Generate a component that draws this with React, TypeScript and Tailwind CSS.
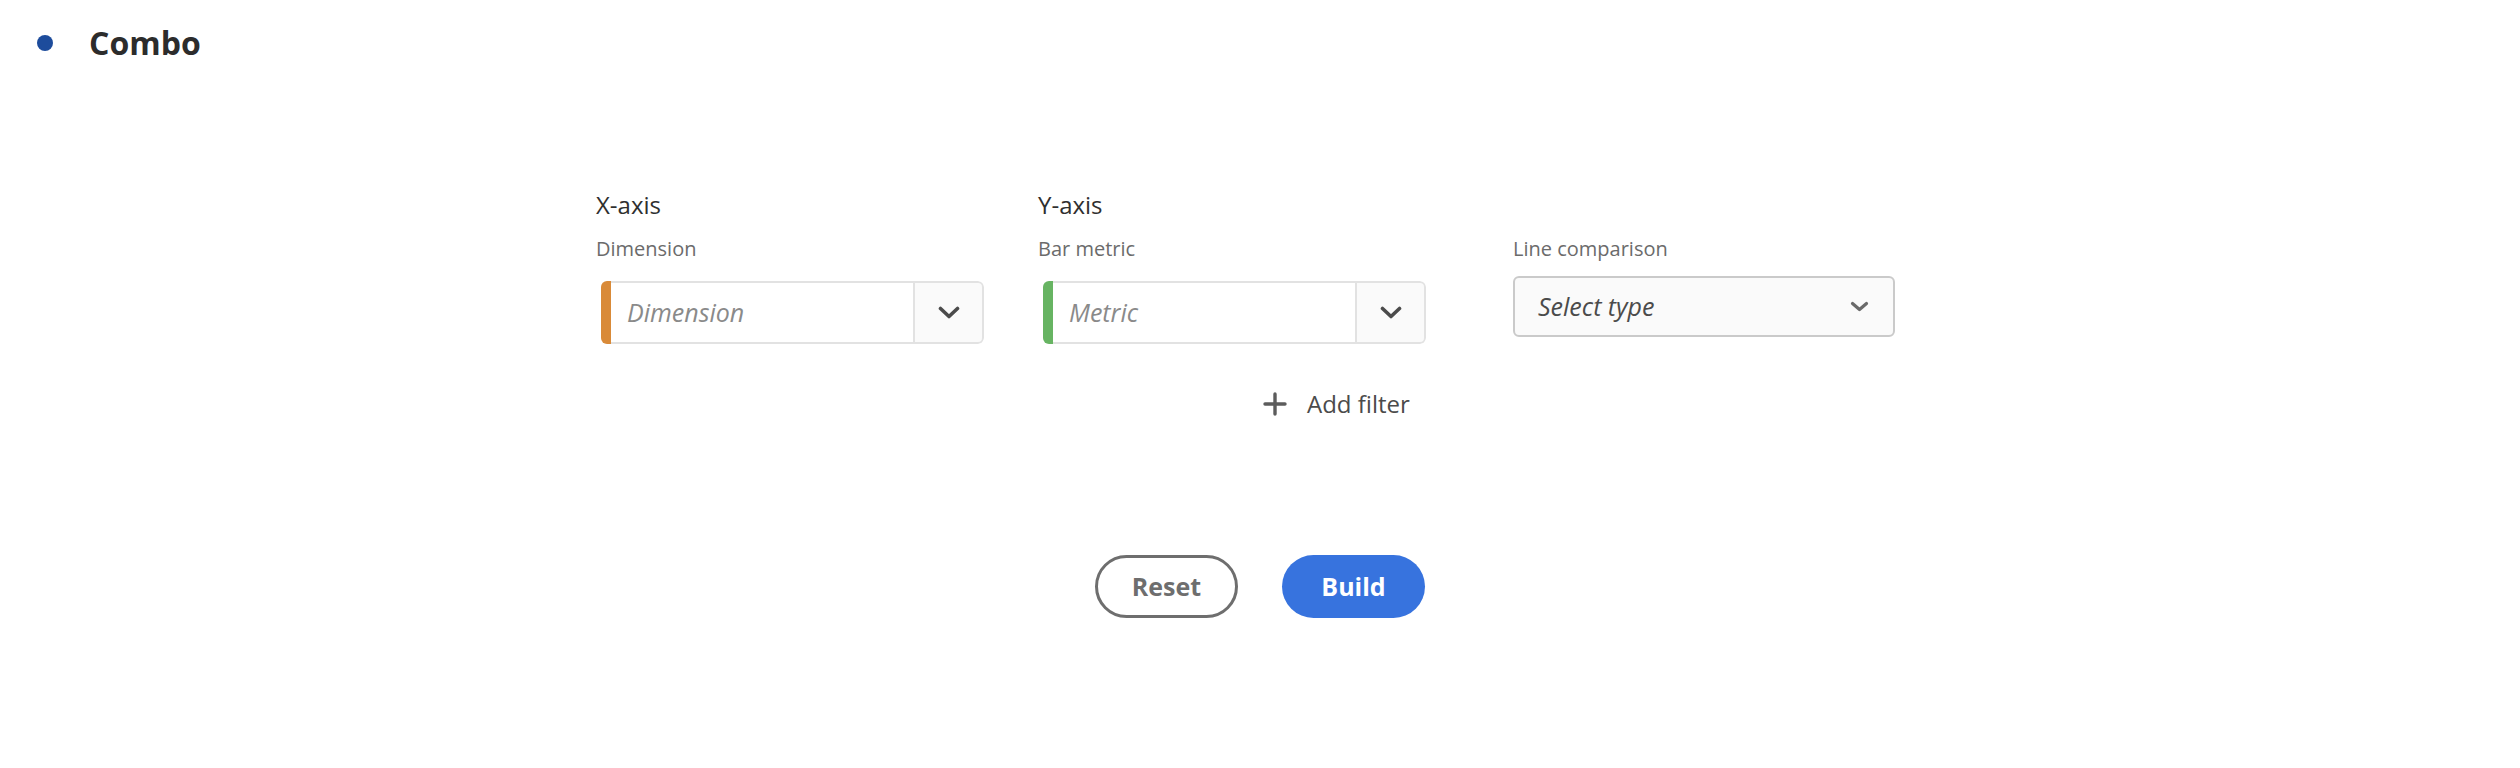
import React from "react";

const font = { fontFamily: '"Open Sans", "Liberation Sans", sans-serif' };

const Chevron = ({ className = "" }: { className?: string }) => (
  <svg width="22" height="13" viewBox="0 0 22 13" className={className} fill="none">
    <polyline points="2.5,2.5 11,10.5 19.5,2.5" stroke="#4b4b4b" strokeWidth="3.6" strokeLinecap="round" strokeLinejoin="round" />
  </svg>
);

interface ComboProps {
  placeholder: string;
  barColor: string;
}

// picker with a coloured left strip and a separate chevron button
const ComboPicker = ({ placeholder, barColor }: ComboProps) => (
  <div className="ml-[5px] flex h-[63px] w-[383px] overflow-hidden rounded-[6px]">
    <div className="w-[10px]" style={{ backgroundColor: barColor }} />
    <div className="flex flex-1 items-center border-y-2 border-[#e2e2e2] bg-white pl-[16px]">
      <span className="text-[25px] italic text-[#8a8a8a]">{placeholder}</span>
    </div>
    <div className="flex w-[71px] items-center justify-center rounded-r-[6px] border-2 border-[#e2e2e2] bg-[#fafafa]">
      <Chevron />
    </div>
  </div>
);

export default function App() {
  return (
    <div className="min-h-screen w-full bg-white" style={font}>
      {/* header */}
      <div className="flex items-center pt-[23px]">
        <div className="ml-[37px] h-[16px] w-[16px] rounded-full bg-[#1d4c9c]" />
        <h1 className="ml-[36px] text-[32px] font-bold leading-[40px] text-[#2c2c2c]">Combo</h1>
      </div>

      <div className="mx-auto mt-[127px] w-[1328px]">
        <div className="flex">
          <div className="w-[442px]">
            <div className="text-[24px] leading-[30px] text-[#2f2f2f]">X-axis</div>
            <div className="mt-[16px] text-[20px] leading-[26px] text-[#6b6b6b]">Dimension</div>
            <div className="mt-[19px]">
              <ComboPicker placeholder="Dimension" barColor="#d98a38" />
            </div>
          </div>
          <div className="w-[475px]">
            <div className="text-[24px] leading-[30px] text-[#2f2f2f]">Y-axis</div>
            <div className="mt-[16px] text-[20px] leading-[26px] text-[#6b6b6b]">Bar metric</div>
            <div className="mt-[19px]">
              <ComboPicker placeholder="Metric" barColor="#67b462" />
            </div>
          </div>
          <div>
            <div className="h-[30px]" />
            <div className="mt-[16px] text-[20px] leading-[26px] text-[#6b6b6b]">Line comparison</div>
            <div className="mt-[14px] flex h-[61px] w-[382px] items-center justify-between rounded-[6px] border-2 border-[#cacaca] bg-[#fafafa] pl-[23px] pr-[24px]">
              <span className="text-[25px] italic text-[#4b4b4b]">Select type</span>
              <svg width="19" height="11" viewBox="0 0 19 11" fill="none">
                <polyline points="2.5,2.5 9.5,8.5 16.5,2.5" stroke="#6a6a6a" strokeWidth="3.2" strokeLinecap="round" strokeLinejoin="round" />
              </svg>
            </div>
          </div>
        </div>

        {/* add filter */}
        <div className="ml-[667px] mt-[45px] flex items-center">
          <svg width="24" height="24" viewBox="0 0 24 24" fill="none">
            <path d="M12 2v20M2 12h20" stroke="#5c5c5c" strokeWidth="3.4" strokeLinecap="round" />
          </svg>
          <span className="ml-[20px] text-[24px] leading-[30px] text-[#4b4b4b]">Add filter</span>
        </div>

        {/* actions */}
        <div className="mt-[136px] flex justify-center gap-[44px]">
          <button className="flex h-[63px] w-[143px] items-center justify-center rounded-full border-[3px] border-[#6e6e6e] bg-white text-[25px] font-bold text-[#6e6e6e]">
            Reset
          </button>
          <button className="flex h-[63px] w-[143px] items-center justify-center rounded-full bg-[#3773de] text-[25px] font-bold text-white">
            Build
          </button>
        </div>
      </div>
    </div>
  );
}
